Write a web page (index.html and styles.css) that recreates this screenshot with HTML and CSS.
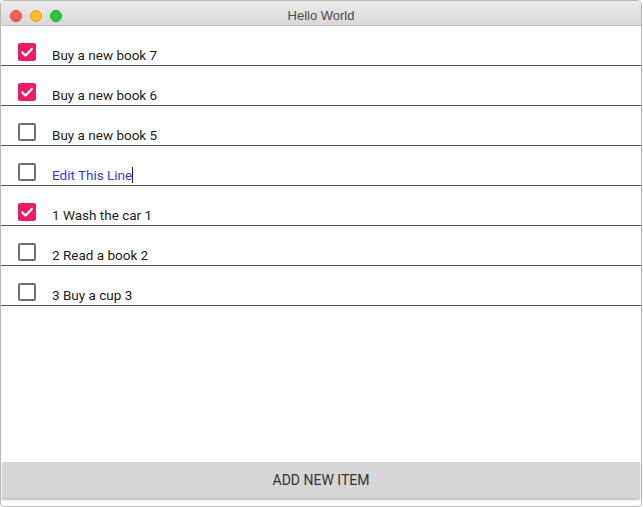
FILE: index.html
```html
<!DOCTYPE html>
<html>
<head>
<meta charset="utf-8">
<link rel="stylesheet" href="styles.css">
</head>
<body>
<div class="window">
  <div class="titlebar">
    <div class="lights">
      <span class="light red"></span>
      <span class="light yellow"></span>
      <span class="light green"></span>
    </div>
    <div class="title">Hello World</div>
  </div>
  <div class="list">
    <div class="row"><span class="box checked"><svg viewBox="0 0 18 18" width="18" height="18"><path d="M4.2 9.4 L7.6 12.6 L13.8 6" fill="none" stroke="#fff" stroke-width="2.2" stroke-linecap="round" stroke-linejoin="round"/></svg></span><span class="label">Buy a new book 7</span></div>
    <div class="row"><span class="box checked"><svg viewBox="0 0 18 18" width="18" height="18"><path d="M4.2 9.4 L7.6 12.6 L13.8 6" fill="none" stroke="#fff" stroke-width="2.2" stroke-linecap="round" stroke-linejoin="round"/></svg></span><span class="label">Buy a new book 6</span></div>
    <div class="row"><span class="box"></span><span class="label">Buy a new book 5</span></div>
    <div class="row"><span class="box"></span><span class="label editing">Edit This Line<span class="caret"></span></span></div>
    <div class="row"><span class="box checked"><svg viewBox="0 0 18 18" width="18" height="18"><path d="M4.2 9.4 L7.6 12.6 L13.8 6" fill="none" stroke="#fff" stroke-width="2.2" stroke-linecap="round" stroke-linejoin="round"/></svg></span><span class="label">1 Wash the car 1</span></div>
    <div class="row"><span class="box"></span><span class="label">2 Read a book 2</span></div>
    <div class="row"><span class="box"></span><span class="label">3 Buy a cup 3</span></div>
  </div>
  <button class="add">ADD NEW ITEM</button>
</div>
</body>
</html>
```
FILE: styles.css
```css
html, body {
  margin: 0;
  padding: 0;
  background: #fff;
}
.window {
  box-sizing: border-box;
  width: 642px;
  height: 507px;
  border: 1px solid #b8b8b8;
  border-radius: 5px 5px 4px 4px;
  display: flex;
  flex-direction: column;
  overflow: hidden;
  background: #fff;
}
.titlebar {
  height: 24px;
  border-bottom: 1px solid #c2c2c2;
  background: linear-gradient(#ececec, #d8d8d8);
  display: flex;
  align-items: center;
  position: relative;
  flex-shrink: 0;
}
.lights {
  display: flex;
  gap: 8px;
  padding-left: 9px;
  padding-top: 6px;
}
.light {
  width: 12px;
  height: 12px;
  border-radius: 50%;
  box-sizing: border-box;
}
.red { background: #fc5f57; border: 1px solid #e0443e; }
.yellow { background: #fdbc2e; border: 1px solid #dea123; }
.green { background: #29c840; border: 1px solid #1aab29; }
.title {
  position: absolute;
  left: 0;
  right: 0;
  top: 7px;
  text-align: center;
  font-family: "Liberation Sans", Arial, sans-serif;
  font-size: 13px;
  color: #4a4a4a;
}
.list {
  flex: 1;
}
.row {
  border-bottom: 1px solid #555;
  display: flex;
  align-items: center;
  padding: 13px 0 0 17px;
  box-sizing: border-box;
  height: 40px;
}
.box {
  width: 18px;
  height: 18px;
  box-sizing: border-box;
  border: 2px solid #6f6f6f;
  border-radius: 2px;
  flex-shrink: 0;
  display: flex;
}
.box.checked {
  border: none;
  background: #e91e63;
}
.label {
  margin-left: 16px;
  padding-top: 5px;
  font-family: Roboto, "Noto Sans", sans-serif;
  font-size: 13.5px;
  color: #1c1c1c;
  display: flex;
  align-items: center;
}
.label.editing {
  color: #3a3ad8;
}
.caret {
  display: inline-block;
  width: 1px;
  height: 16px;
  background: #1a1a80;
}
.add {
  flex-shrink: 0;
  margin: 0 1px 8px 1px;
  height: 36px;
  border: none;
  background: #d6d6d6;
  box-shadow: 0 2px 2px rgba(0,0,0,0.25);
  font-family: Roboto, "Noto Sans", sans-serif;
  font-size: 14px;
  color: #333;
  padding: 0;
}
```
